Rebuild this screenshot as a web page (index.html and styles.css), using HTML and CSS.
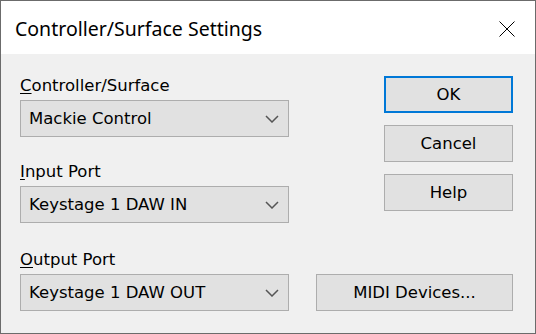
FILE: index.html
```html
<!DOCTYPE html>
<html>
  <head>
    <meta charset="UTF-8">
    <title>Controller/Surface Settings</title>
    <link rel="stylesheet" href="styles.css">
  </head>
  <body>
    <div class="dialog">
      <div class="titlebar">
        <span class="title">Controller/Surface Settings</span>
        <button class="close" aria-label="Close">
          <svg width="16" height="16" viewBox="0 0 16 16">
            <path d="M0.5 0.5 L15.5 15.5 M15.5 0.5 L0.5 15.5" stroke="#000" stroke-width="1" fill="none"/>
          </svg>
        </button>
      </div>

      <div class="content">
        <div class="fields">
          <div class="field">
            <label><u>C</u>ontroller/Surface</label>
            <div class="combo">
              <span>Mackie Control</span>
              <svg class="chevron" width="14" height="8" viewBox="0 0 14 8">
                <path d="M1 1 L7 7 L13 1" stroke="#555" stroke-width="1.5" fill="none"/>
              </svg>
            </div>
          </div>
          <div class="field">
            <label><u>I</u>nput Port</label>
            <div class="combo">
              <span>Keystage 1 DAW IN</span>
              <svg class="chevron" width="14" height="8" viewBox="0 0 14 8">
                <path d="M1 1 L7 7 L13 1" stroke="#555" stroke-width="1.5" fill="none"/>
              </svg>
            </div>
          </div>
          <div class="field last">
            <label><u>O</u>utput Port</label>
            <div class="combo">
              <span>Keystage 1 DAW OUT</span>
              <svg class="chevron" width="14" height="8" viewBox="0 0 14 8">
                <path d="M1 1 L7 7 L13 1" stroke="#555" stroke-width="1.5" fill="none"/>
              </svg>
            </div>
          </div>
        </div>

        <div class="actions">
          <div class="stack">
            <button class="btn default">OK</button>
            <button class="btn">Cancel</button>
            <button class="btn">Help</button>
          </div>
          <button class="btn wide">MIDI Devices...</button>
        </div>
      </div>
    </div>
  </body>
</html>
```

FILE: styles.css
```css
body {
  margin: 0;
  font-family: "DejaVu Sans", sans-serif;
}

.dialog {
  width: 536px;
  height: 334px;
  box-sizing: border-box;
  border: 1px solid #6b6b6b;
  display: flex;
  flex-direction: column;
  background: #f0f0f0;
}

.titlebar {
  flex: 0 0 53px;
  background: #fff;
  display: flex;
  align-items: center;
  justify-content: space-between;
  padding: 2px 14px 0 14px;
  box-sizing: border-box;
}

.title {
  font-family: "Noto Sans", sans-serif;
  font-size: 19.5px;
  color: #000;
}

.close {
  background: none;
  border: 0;
  padding: 0;
  margin-right: 6px;
  line-height: 0;
}

.content {
  flex: 1;
  min-height: 0;
  display: flex;
  justify-content: space-between;
  padding: 22px 22px 0 19px;
}

.fields {
  width: 269px;
}

.field {
  margin-bottom: 25px;
}

.field.last {
  margin: 27px 0 0 0;
}

.field label {
  display: block;
  font-size: 16.5px;
  line-height: 20px;
  margin-bottom: 4px;
  color: #000;
}

.field u {
  text-underline-offset: 2px;
}

.combo {
  height: 37px;
  box-sizing: border-box;
  border: 1px solid #adadad;
  background: #e1e1e1;
  display: flex;
  align-items: center;
  justify-content: space-between;
  padding: 0 9px 0 8px;
  font-size: 16.5px;
  color: #000;
}

.actions {
  width: 197px;
  display: flex;
  flex-direction: column;
  align-items: flex-end;
  justify-content: space-between;
  padding: 0 0 22px 0;
}

.stack {
  display: flex;
  flex-direction: column;
  gap: 12px;
}

.btn {
  width: 129px;
  height: 37px;
  box-sizing: border-box;
  border: 1px solid #adadad;
  background: #e1e1e1;
  font-family: "DejaVu Sans", sans-serif;
  font-size: 16.5px;
  color: #000;
  padding: 0;
}

.btn.default {
  border: 2px solid #0078d7;
}

.btn.wide {
  width: 197px;
}
```
